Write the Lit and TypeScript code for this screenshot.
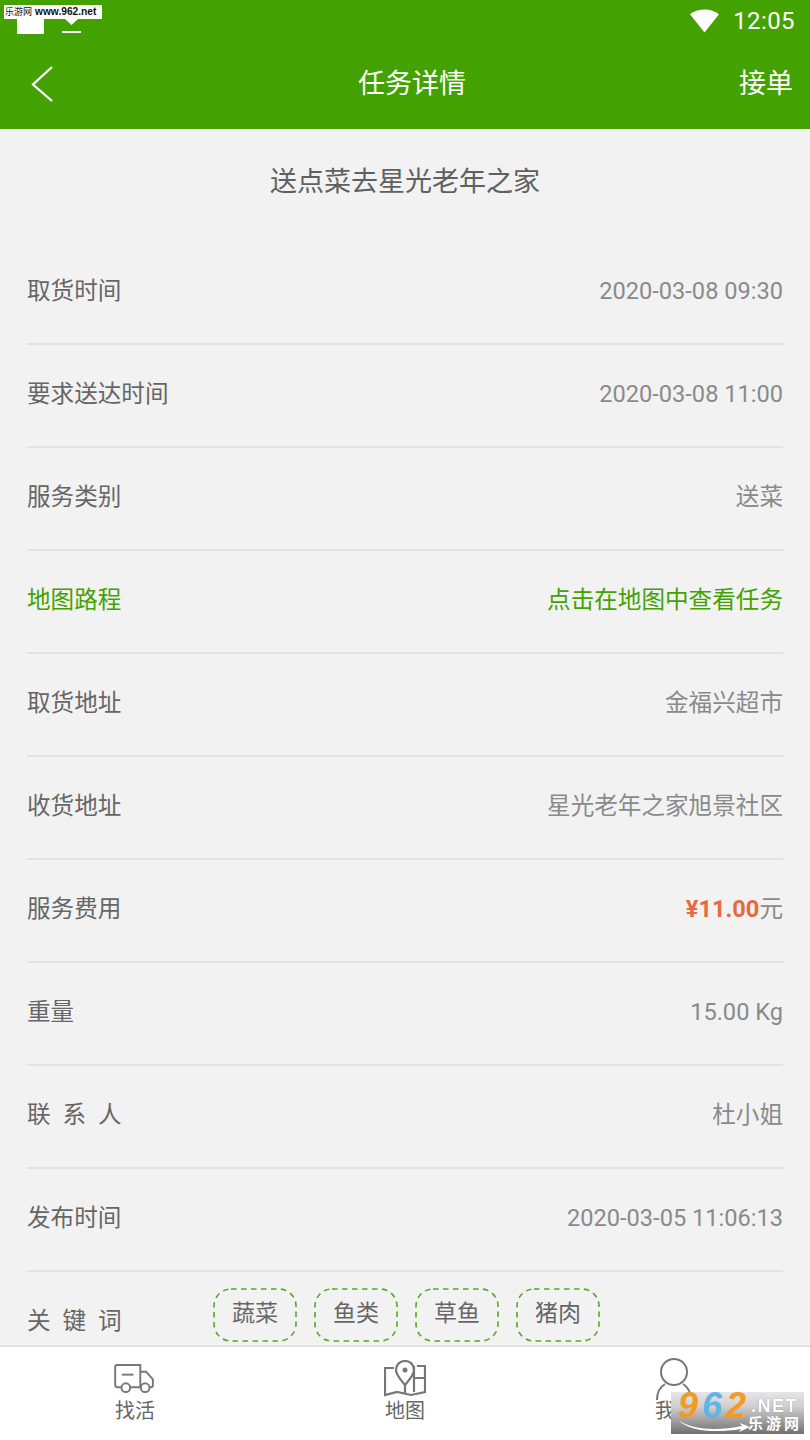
import { LitElement, html, css, svg } from "lit";
import { customElement } from "lit/decorators.js";

type Row = { label: string; value?: unknown; cls?: string };

@customElement("app-root")
export class AppRoot extends LitElement {
  static styles = css`
    :host {
      display: block;
      width: 810px;
      height: 1440px;
      overflow: hidden;
      position: relative;
      background: #f2f2f2;
      font-family: Roboto, "Noto Sans CJK SC", sans-serif;
      color: #666;
    }
    .page { display: flex; flex-direction: column; height: 1440px; }
    .head { height: 129px; background: #43a201; color: #fff; flex: none; display: flex; flex-direction: column; }
    .status { height: 38px; display: flex; justify-content: space-between; align-items: flex-start; padding: 0 15px 0 17px; box-sizing: border-box; }
    .status-left { display: flex; gap: 18px; height: 34px; align-items: flex-end; }
    .status-right { display: flex; align-items: center; gap: 14px; height: 42px; font-size: 24px; line-height: 28px; letter-spacing: 0.4px; }
    .status-right svg { display: block; }
    .nav { height: 91px; display: grid; grid-template-columns: 1fr auto 1fr; align-items: center; padding: 0 17px 0 30px; box-sizing: border-box; font-size: 27px; line-height: 32px; }
    .nav .title { margin-left: 1px; }
    .nav .act { justify-self: end; }
    .nav svg { display: block; margin-top: 1px; }
    .main { flex: 1; min-height: 0; overflow: hidden; padding: 0 27px; }
    .task { text-align: center; font-size: 27px; line-height: 32px; padding: 37px 0 0; height: 113px; box-sizing: border-box; color: #606060; }
    .row { height: 103px; box-sizing: border-box; border-bottom: 2px solid #e2e2e2; display: flex; justify-content: space-between; align-items: center; font-size: 23.6px; line-height: 28px; padding-bottom: 3px; }
    .row .val { color: #8a8a8a; }
    .row .wide { word-spacing: 6px; }
    .row.green, .row.green .val { color: #43a201; }
    .price { color: #e8693a; font-weight: 700; }
    .kw { display: flex; height: 74px; }
    .kw-label { font-size: 23.6px; margin-top: 35px; line-height: 28px; width: 186px; flex: none; word-spacing: 6px; }
    .tags { display: flex; gap: 17px; margin-top: 16px; align-items: flex-start; }
    .tag { position: relative; width: 84px; height: 54px; display: flex; align-items: center; justify-content: center; font-size: 23px; line-height: 28px; color: #666; padding-bottom: 3px; box-sizing: border-box; }
    .tag svg { position: absolute; inset: 0; display: block; }
    .tabs { flex: none; height: 95px; background: #fff; border-top: 2px solid #e2e2e2; box-sizing: border-box; display: grid; grid-template-columns: repeat(3, 1fr); }
    .tab { display: flex; flex-direction: column; align-items: center; font-size: 20px; color: #666; line-height: 24px; }
    .tab .icon { height: 51px; box-sizing: border-box; }
    .tab svg { display: block; }
    .i-truck { padding-top: 17px; margin-left: -2px; }
    .i-map { padding-top: 13px; }
    .i-me { padding-top: 10px; margin-left: -2px; }
    .tab span { margin-top: 1px; }
    .wm-top { position: absolute; left: 4px; top: 5px; width: 98px; height: 14px; background: #fff; color: #111; font-size: 10.2px; line-height: 14px; white-space: nowrap; padding-left: 1px; box-sizing: border-box; font-family: "Liberation Sans", "Noto Sans CJK SC", sans-serif; font-weight: 700; }
    .wm-top .cn { font-size: 9px; font-weight: 400; margin-right: 3px; }
    .wm-bot { position: absolute; left: 671px; top: 1392px; width: 133px; height: 42px; background: linear-gradient(#e6e6e6 0%, #cfcfcf 35%, #707070 100%); font-family: "Liberation Sans", "Noto Sans CJK SC", sans-serif; }
    .wm-num { position: absolute; left: 7px; top: -2px; font-size: 36px; line-height: 32px; font-weight: 700; font-style: italic; letter-spacing: 4px; }
    .o { color: #f39a24; }
    .b { color: #62b3e6; }
    .wm-net { position: absolute; left: 80px; top: 4px; font-size: 18px; line-height: 20px; color: #fff; letter-spacing: 1.500px; font-weight: 700; text-shadow: 0 0 1px #777; }
    .wm-cn { position: absolute; left: 77px; top: 23px; font-size: 15px; line-height: 18px; color: #fff; letter-spacing: 3px; font-weight: 700; }
    .wm-arc { position: absolute; left: 5px; top: 26px; display: block; }
  `;

  rows: Row[] = [
    { label: "取货时间", value: "2020-03-08 09:30" },
    { label: "要求送达时间", value: "2020-03-08 11:00" },
    { label: "服务类别", value: "送菜" },
    { label: "地图路程", value: "点击在地图中查看任务", cls: "green" },
    { label: "取货地址", value: "金福兴超市" },
    { label: "收货地址", value: "星光老年之家旭景社区" },
    { label: "服务费用", value: html`<span class="price">¥11.00</span>元` },
    { label: "重量", value: "15.00 Kg" },
    { label: "联 系 人", value: "杜小姐" },
    { label: "发布时间", value: "2020-03-05 11:06:13" },
  ];

  render() {
    return html`
      <div class="page">
        <div class="head">
          <div class="status">
            <div class="status-left">
              <svg width="27" height="19" viewBox="0 0 27 19"><rect width="27" height="19" rx="1" fill="#fff"/></svg>
              <svg width="19" height="34" viewBox="0 0 19 34"><path d="M3 19h13l-6.500 6z" fill="#fff"/><rect y="31" width="19" height="2" fill="#fff"/></svg>
            </div>
            <div class="status-right">
              <svg width="29" height="24" viewBox="0 0 30 24"><path d="M0 5C4 1.500 9 0 15 0s11 1.500 15 5L15 24z" fill="#fff"/></svg>
              <span>12:05</span>
            </div>
          </div>
          <div class="nav">
            <svg width="24" height="38" viewBox="0 0 24 38"><path d="M22 2 3 19.500 22 36" fill="none" stroke="#fff" stroke-width="2.300"/></svg>
            <div class="title">任务详情</div>
            <div class="act">接单</div>
          </div>
        </div>
        <div class="main">
          <div class="task">送点菜去星光老年之家</div>
          ${this.rows.map(
            (r) => html`<div class="row ${r.cls ?? ""}"><span class="wide">${r.label}</span><span class="val">${r.value}</span></div>`
          )}
          <div class="kw">
            <div class="kw-label">关 键 词</div>
            <div class="tags">
              ${["蔬菜", "鱼类", "草鱼", "猪肉"].map(
                (t) => html`<div class="tag">
                  <svg width="84" height="54" viewBox="0 0 84 54"><rect x="1" y="1" width="82" height="52" rx="17" fill="none" stroke="#55a823" stroke-width="1.600" stroke-dasharray="5.500 4.500"/></svg>
                  <span>${t}</span>
                </div>`
              )}
            </div>
          </div>
        </div>
        <div class="tabs">
          <div class="tab">
            <div class="icon i-truck">${svg`<svg width="41" height="29" viewBox="0 0 42 30" fill="none" stroke="#777" stroke-width="2"><path d="M7.500 24H3.500C2 24 1 23 1 21.500V3C1 2 2 1 3 1h24v23H16.500M27 8h6l7 8v6c0 1.500-1 2-2 2h-1.500M27 24h.5"/><path d="M8 11h12" /><circle cx="12" cy="24.500" r="4.500"/><circle cx="32" cy="24.500" r="4.500"/></svg>`}</div>
            <span>找活</span>
          </div>
          <div class="tab">
            <div class="icon i-map">${svg`<svg width="42" height="37" viewBox="0 0 42 37" fill="none" stroke="#777" stroke-width="2.200"><path d="M10 8H1v27l12-3 14 3 14-3V6l-8 0"/><path d="M21 1c-5.500 0-9 4-9 9 0 5 5 10 9 15 4-5 9-10 9-15 0-5-3.500-9-9-9z"/><circle cx="21" cy="10" r="2.500" fill="#777" stroke="none"/><path d="M21 25v9M30 18h11M30 6v26"/></svg>`}</div>
            <span>地图</span>
          </div>
          <div class="tab">
            <div class="icon i-me">${svg`<svg width="38" height="44" viewBox="0 0 38 44" fill="none" stroke="#777" stroke-width="2"><circle cx="19" cy="15" r="13"/><path d="M2 43c0-8 3-13 8-16M36 43c0-8-3-13-8-16"/></svg>`}</div>
            <span>我的</span>
          </div>
        </div>
      </div>
      <div class="wm-top"><span class="cn">乐游网</span>www.962.net</div>
      <div class="wm-bot">
        <div class="wm-num"><span class="o">9</span><span class="b">6</span><span class="o">2</span></div>
        <div class="wm-net">.NET</div>
        <div class="wm-cn">乐游网</div>
        <svg class="wm-arc" width="75" height="16" viewBox="0 0 75 16"><path d="M2 2C16 12 42 13 66 8l-2-3 10 4-11 5 2-3C40 15 14 14 2 2z" fill="#fff"/></svg>
      </div>
    `;
  }
}
